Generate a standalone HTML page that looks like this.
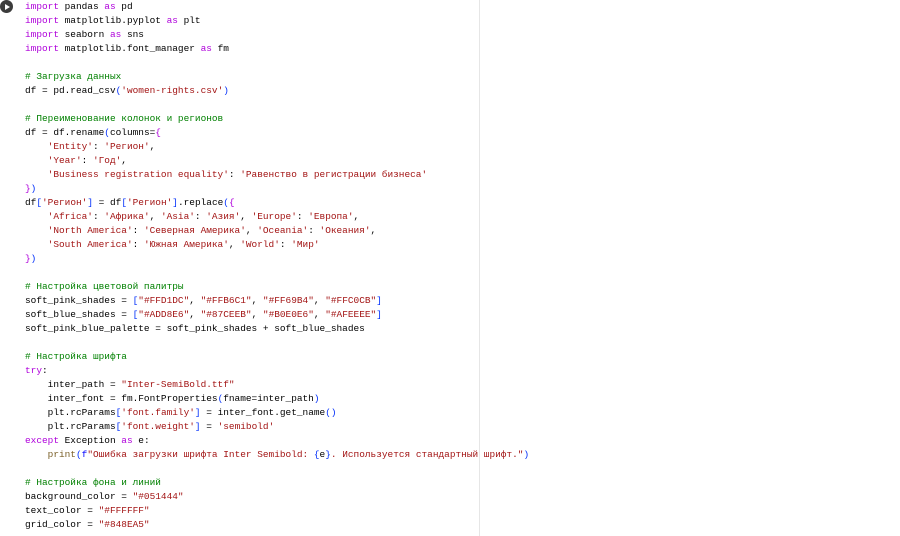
<!DOCTYPE html>
<html><head><meta charset="utf-8"><style>
body{margin:0;background:#fff;width:900px;height:536px;overflow:hidden;position:relative}
pre{position:absolute;left:25px;top:0px;margin:0;font-family:"Liberation Mono","DejaVu Sans Mono",monospace;font-size:9.45px;line-height:14px;color:#000}
.k{color:#af00db}.s{color:#a31515}.c{color:#008000}.b{color:#0431fa}.p{color:#795e26}.e{color:#0000ff}
.ruler{position:absolute;left:479px;top:0;width:1px;height:536px;background:#e6e6e6}
.play{position:absolute;left:0;top:0;width:13px;height:13px;border-radius:50%;background:#3c3c3c}
.play:after{content:"";position:absolute;left:5px;top:3.5px;border-left:5px solid #fff;border-top:3px solid transparent;border-bottom:3px solid transparent}
</style></head><body>
<div class="ruler"></div><div class="play"></div>
<pre><span class="k">import</span> pandas <span class="k">as</span> pd
<span class="k">import</span> matplotlib.pyplot <span class="k">as</span> plt
<span class="k">import</span> seaborn <span class="k">as</span> sns
<span class="k">import</span> matplotlib.font_manager <span class="k">as</span> fm

<span class="c"># Загрузка данных</span>
df = pd.read_csv<span class="b">(</span><span class="s">'women-rights.csv'</span><span class="b">)</span>

<span class="c"># Переименование колонок и регионов</span>
df = df.rename<span class="b">(</span>columns=<span class="k">{</span>
    <span class="s">'Entity'</span>: <span class="s">'Регион'</span>,
    <span class="s">'Year'</span>: <span class="s">'Год'</span>,
    <span class="s">'Business registration equality'</span>: <span class="s">'Равенство в регистрации бизнеса'</span>
<span class="k">}</span><span class="b">)</span>
df<span class="b">[</span><span class="s">'Регион'</span><span class="b">]</span> = df<span class="b">[</span><span class="s">'Регион'</span><span class="b">]</span>.replace<span class="b">(</span><span class="k">{</span>
    <span class="s">'Africa'</span>: <span class="s">'Африка'</span>, <span class="s">'Asia'</span>: <span class="s">'Азия'</span>, <span class="s">'Europe'</span>: <span class="s">'Европа'</span>,
    <span class="s">'North America'</span>: <span class="s">'Северная Америка'</span>, <span class="s">'Oceania'</span>: <span class="s">'Океания'</span>,
    <span class="s">'South America'</span>: <span class="s">'Южная Америка'</span>, <span class="s">'World'</span>: <span class="s">'Мир'</span>
<span class="k">}</span><span class="b">)</span>

<span class="c"># Настройка цветовой палитры</span>
soft_pink_shades = <span class="b">[</span><span class="s">"#FFD1DC"</span>, <span class="s">"#FFB6C1"</span>, <span class="s">"#FF69B4"</span>, <span class="s">"#FFC0CB"</span><span class="b">]</span>
soft_blue_shades = <span class="b">[</span><span class="s">"#ADD8E6"</span>, <span class="s">"#87CEEB"</span>, <span class="s">"#B0E0E6"</span>, <span class="s">"#AFEEEE"</span><span class="b">]</span>
soft_pink_blue_palette = soft_pink_shades + soft_blue_shades

<span class="c"># Настройка шрифта</span>
<span class="k">try</span>:
    inter_path = <span class="s">"Inter-SemiBold.ttf"</span>
    inter_font = fm.FontProperties<span class="b">(</span>fname=inter_path<span class="b">)</span>
    plt.rcParams<span class="b">[</span><span class="s">'font.family'</span><span class="b">]</span> = inter_font.get_name<span class="b">()</span>
    plt.rcParams<span class="b">[</span><span class="s">'font.weight'</span><span class="b">]</span> = <span class="s">'semibold'</span>
<span class="k">except</span> Exception <span class="k">as</span> e:
    <span class="p">print</span><span class="b">(</span><span class="e">f</span><span class="s">"Ошибка загрузки шрифта Inter Semibold: </span><span class="b">{</span>e<span class="b">}</span><span class="s">. Используется стандартный шрифт."</span><span class="b">)</span>

<span class="c"># Настройка фона и линий</span>
background_color = <span class="s">"#051444"</span>
text_color = <span class="s">"#FFFFFF"</span>
grid_color = <span class="s">"#848EA5"</span></pre>
</body></html>
